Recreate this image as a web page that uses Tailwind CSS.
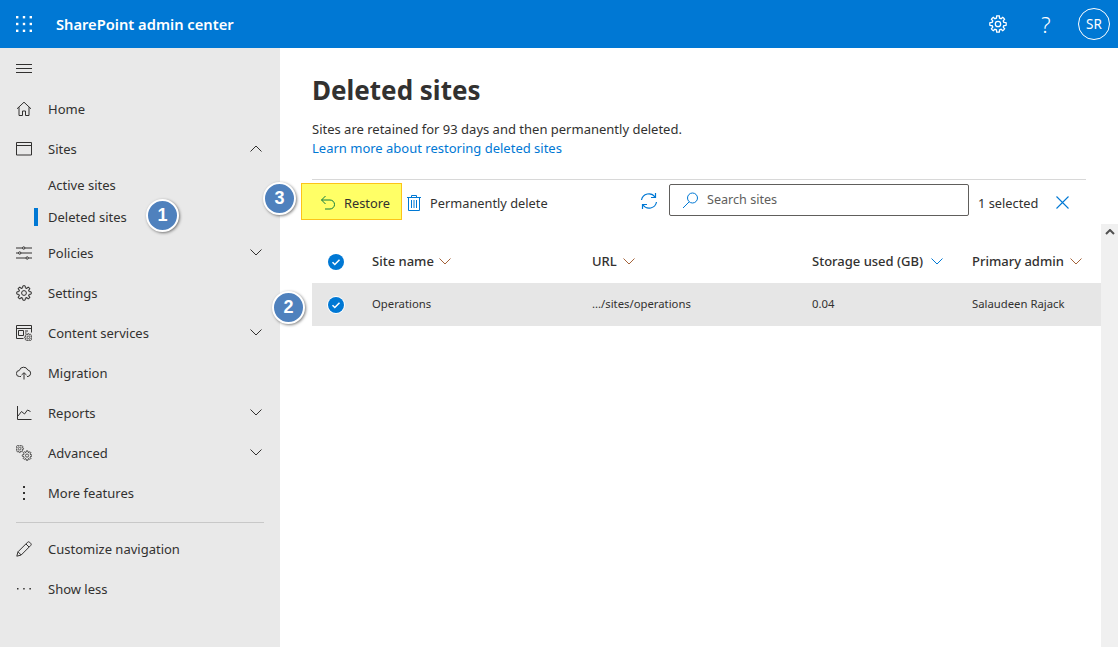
<!DOCTYPE html>
<html lang="en">
<head>
<meta charset="utf-8">
<title>Deleted sites</title>
<script src="https://cdn.jsdelivr.net/npm/@tailwindcss/browser@4"></script>
</head>
<body class="w-[1118px] h-[647px] overflow-hidden bg-white font-['Noto_Sans','Open_Sans',sans-serif] text-[13px] text-[#323130]">
<svg class="hidden" width="0" height="0"><defs>
  <path id="tooth" d="M8.300 4.900 10 4.100 10.200 1.300Q12 .8 13.800 1.300L14 4.100 15.700 4.900"/>
  <g id="gear" fill="none">
    <use href="#tooth"/><use href="#tooth" transform="rotate(45 12 12)"/><use href="#tooth" transform="rotate(90 12 12)"/><use href="#tooth" transform="rotate(135 12 12)"/><use href="#tooth" transform="rotate(180 12 12)"/><use href="#tooth" transform="rotate(225 12 12)"/><use href="#tooth" transform="rotate(270 12 12)"/><use href="#tooth" transform="rotate(315 12 12)"/>
    <circle cx="12" cy="12" r="3.600"/>
  </g>
</defs></svg>
<header class="h-12 bg-[#0078d4] flex items-center text-white">
  <button class="w-12 h-12 flex items-center justify-center">
    <svg width="16" height="16" viewBox="0 0 16 16" fill="#fff"><rect x="0" y="0" width="2.400" height="2.400"/><rect x="6.800" y="0" width="2.400" height="2.400"/><rect x="13.600" y="0" width="2.400" height="2.400"/><rect x="0" y="6.800" width="2.400" height="2.400"/><rect x="6.800" y="6.800" width="2.400" height="2.400"/><rect x="13.600" y="6.800" width="2.400" height="2.400"/><rect x="0" y="13.600" width="2.400" height="2.400"/><rect x="6.800" y="13.600" width="2.400" height="2.400"/><rect x="13.600" y="13.600" width="2.400" height="2.400"/></svg>
  </button>
  <span class="ml-2 text-[14.700px] font-semibold">SharePoint admin center</span>
  <div class="ml-auto flex items-center">
    <button class="w-12 h-12 flex items-center justify-center">
      <svg width="18" height="18" viewBox="0 0 24 24" stroke="#fff" stroke-width="1.700"><use href="#gear"/></svg>
    </button>
    <button class="w-12 h-12 flex items-center justify-center text-[22px] font-light">?</button>
    <div class="ml-[8px] mr-[8px] w-8 h-8 rounded-full border border-white flex items-center justify-center text-[13.500px]">SR</div>
  </div>
</header>
<div class="flex h-[599px]">
  <nav class="w-[280px] shrink-0 bg-[#e9e9e9] flex flex-col">
    <button class="h-10 pl-4 flex items-center">
      <svg width="16" height="10" viewBox="0 0 16 10" stroke="#323130" stroke-width="1"><path d="M0 1.500h16M0 5.500h16M0 9.500h16"/></svg>
    </button>
    <div class="h-px"></div>
    <a class="h-10 flex items-center">
      <span class="w-12 pl-4 flex"><svg width="16" height="16" viewBox="0 0 16 16" fill="none" stroke="#323130"><path d="M1 7.800 8 1.200l7 6.600M3 6.200v8.300h3.500V10h3v4.500H13V6.200"/></svg></span>
      <span class="mt-[2px]">Home</span>
    </a>
    <a class="h-10 flex items-center">
      <span class="w-12 pl-4 flex"><svg width="16" height="14" viewBox="0 0 16 14" fill="none" stroke="#323130"><path d="M.5.500h15v12.500H.5zM.5 3.500h15"/></svg></span>
      <span class="mt-[2px]">Sites</span>
      <svg class="ml-auto mr-[18px] -mt-[2px]" width="12" height="7" viewBox="0 0 12 7" fill="none" stroke="#323130"><path d="m.5 6.500 5.500-5.500 5.500 5.500"/></svg>
    </a>
    <a class="h-8 flex items-center pl-12 pt-[2px]">Active sites</a>
    <a class="h-8 flex items-center pl-12 pt-[2px] relative"><span class="absolute left-[34px] top-[7px] w-1 h-[18px] bg-[#0078d4]"></span>Deleted sites</a>
    <a class="h-10 flex items-center">
      <span class="w-12 pl-4 flex"><svg width="16" height="16" viewBox="0 0 16 16" fill="none" stroke="#323130"><path d="M0 3h6.500M9 3h7M0 8h2.500M5 8h11M0 13h10M12.500 13H16"/><circle cx="7.700" cy="3" r="1.200"/><circle cx="3.700" cy="8" r="1.200"/><circle cx="11.200" cy="13" r="1.200"/></svg></span>
      <span class="mt-[2px]">Policies</span>
      <svg class="ml-auto mr-[18px] -mt-[2px]" width="12" height="7" viewBox="0 0 12 7" fill="none" stroke="#323130"><path d="m.5.500 5.500 5.500 5.500-5.500"/></svg>
    </a>
    <a class="h-10 flex items-center">
      <span class="w-12 pl-4 flex"><svg width="16" height="16" viewBox="0 0 24 24" stroke="#323130" stroke-width="1.500"><use href="#gear"/></svg></span>
      <span class="mt-[2px]">Settings</span>
    </a>
    <a class="h-10 flex items-center">
      <span class="w-12 pl-4 flex"><svg width="16" height="16" viewBox="0 0 16 16" fill="none" stroke="#323130"><path d="M7.500 13.500H.5V.5h15V7.500M.5 3.500h15M2.500 5.500h5v5h-5zM9 6h3M9 8h1.500"/><use href="#gear" transform="translate(8.200 8.200) scale(.35)" stroke-width="2.200"/></svg></span>
      <span class="mt-[2px]">Content services</span>
      <svg class="ml-auto mr-[18px] -mt-[2px]" width="12" height="7" viewBox="0 0 12 7" fill="none" stroke="#323130"><path d="m.5.500 5.500 5.500 5.500-5.500"/></svg>
    </a>
    <a class="h-10 flex items-center">
      <span class="w-12 pl-4 flex"><svg width="16" height="14" viewBox="0 0 16 14" fill="none" stroke="#323130"><path d="M5 10.500H3.500a3 3 0 0 1-.2-6A4.500 4.500 0 0 1 11.800 4a3.300 3.300 0 0 1 .2 6.500h-1M8 13.500V7M5.500 9 8 6.700 10.500 9"/></svg></span>
      <span class="mt-[2px]">Migration</span>
    </a>
    <a class="h-10 flex items-center">
      <span class="w-12 pl-4 flex"><svg width="16" height="16" viewBox="0 0 16 16" fill="none" stroke="#323130"><path d="M1.500 1v13.500H15.500M2 11l3.500-4.500 3 2.500 3-4 3 1.500"/></svg></span>
      <span class="mt-[2px]">Reports</span>
      <svg class="ml-auto mr-[18px] -mt-[2px]" width="12" height="7" viewBox="0 0 12 7" fill="none" stroke="#323130"><path d="m.5.500 5.500 5.500 5.500-5.500"/></svg>
    </a>
    <a class="h-10 flex items-center">
      <span class="w-12 pl-4 flex"><svg width="16" height="16" viewBox="0 0 16 16" stroke="#323130"><use href="#gear" transform="translate(-.7 -.7) scale(.36)" stroke-width="2"/><use href="#gear" transform="translate(5.800 5.300) scale(.44)" stroke-width="1.800"/></svg></span>
      <span class="mt-[2px]">Advanced</span>
      <svg class="ml-auto mr-[18px] -mt-[2px]" width="12" height="7" viewBox="0 0 12 7" fill="none" stroke="#323130"><path d="m.5.500 5.500 5.500 5.500-5.500"/></svg>
    </a>
    <a class="h-10 flex items-center">
      <span class="w-12 pl-4 flex"><svg width="16" height="16" viewBox="0 0 16 16" fill="#323130"><rect x="7" y="1" width="2" height="2"/><rect x="7" y="7" width="2" height="2"/><rect x="7" y="13" width="2" height="2"/></svg></span>
      <span class="mt-[2px]">More features</span>
    </a>
    <div class="mx-4 mt-[9px] mb-[6px] h-[1px] w-[248px] bg-[#c8c8c8]"></div>
    <a class="h-10 flex items-center">
      <span class="w-12 pl-4 flex"><svg width="16" height="16" viewBox="0 0 16 16" fill="none" stroke="#323130"><path d="M.8 15.200 2 10.800 11.500 1.300a1.600 1.600 0 0 1 2.200 0l1 1a1.600 1.600 0 0 1 0 2.200L5.200 14zM2 10.800 5.200 14M10 3l3 3"/></svg></span>
      <span class="mt-[2px]">Customize navigation</span>
    </a>
    <a class="h-10 flex items-center">
      <span class="w-12 pl-4 flex"><svg width="16" height="4" viewBox="0 0 16 4" fill="#323130"><rect x="1" y="1" width="1.500" height="1.500"/><rect x="7.200" y="1" width="1.500" height="1.500"/><rect x="13.400" y="1" width="1.500" height="1.500"/></svg></span>
      <span class="mt-[2px]">Show less</span>
    </a>
  </nav>
  <main class="flex-1 flex flex-col min-w-0 pl-8">
    <h1 class="mt-[23px] text-[26px] leading-[38px] font-bold text-[#323130]">Deleted sites</h1>
    <p class="mt-[11px] leading-[19px]">Sites are retained for 93 days and then permanently deleted.</p>
    <a class="leading-[19px] text-[#0078d4]">Learn more about restoring deleted sites</a>
    <div class="mt-[21px] w-[774px] h-px bg-[#d8d8d8]"></div>
    <div class="flex items-start h-[44px] -ml-[11px] text-[12.800px]">
      <button class="mt-[3px] w-[101px] h-[37px] bg-[#ffff66] border-[1.500px] border-[#fcc419] flex items-center pl-[18px] pt-[3px] gap-[8px]">
        <svg width="16" height="16" viewBox="0 0 16 16" fill="none" stroke="#107c41"><path d="M5.500 1 1.500 5l4 4M1.500 5H10a4.500 4.500 0 0 1 0 9H5"/></svg>
        <span class="mt-[2px]">Restore</span>
      </button>
      <button class="mt-[3px] h-[37px] ml-[5px] pt-[3px] flex items-center gap-[9px]">
        <svg width="14" height="16" viewBox="0 0 14 16" fill="none" stroke="#0078d4"><path d="M0 2.500h14M4.500 2.500V.5h5v2M1.500 2.500v13h11v-13M4.500 5v8M7 5v8M9.500 5v8"/></svg>
        <span class="mt-[2px]">Permanently delete</span>
      </button>
      <button class="ml-auto mt-[12px] flex"><svg width="18" height="18" viewBox="0 0 18 18" fill="none" stroke="#0078d4" stroke-width="1.200"><path d="M1.500 8A7.500 7.500 0 0 1 15 5M16.500 10A7.500 7.500 0 0 1 3 13M15.500 1v4.500H11M2.500 17v-4.500H7"/></svg></button>
      <div class="ml-[11px] mt-[4px] w-[300px] h-[32px] border border-[#605e5c] rounded-[2px] flex items-center pl-3 gap-2">
        <svg width="17" height="17" viewBox="0 0 17 17" fill="none" stroke="#0078d4"><circle cx="10.500" cy="6" r="5"/><path d="M7 10 1 16"/></svg>
        <span class="text-[#605e5c] text-[12.600px] mt-[1px]">Search sites</span>
      </div>
      <span class="ml-[9px] mt-[14px] leading-[19px] w-[60px] whitespace-nowrap">1 selected</span>
      <button class="ml-[18px] mt-[16px] mr-[49px] flex"><svg width="13" height="13" viewBox="0 0 13 13" fill="none" stroke="#0078d4" stroke-width="1.100"><path d="m.5.500 12 12M12.500.5l-12 12"/></svg></button>
    </div>
    <div class="flex-1 flex min-h-0">
      <div class="flex-1 min-w-0">
        <div class="h-[59px] pt-[17px] flex items-center font-medium">
          <span class="w-[60px] pl-4 flex"><svg width="16" height="16" viewBox="0 0 16 16"><circle cx="8" cy="8" r="8" fill="#0078d4"/><path d="m4.500 8.300 2.300 2.200 4.700-4.700" fill="none" stroke="#fff" stroke-width="1.500"/></svg></span>
          <span class="w-[220px] flex items-center gap-[5px]">Site name <svg class="-mt-[1px]" width="12" height="7" viewBox="0 0 12 7" fill="none" stroke="#a4633a"><path d="m.5.500 5.500 5.500 5.500-5.500"/></svg></span>
          <span class="w-[220px] flex items-center gap-[6px]">URL <svg class="-mt-[1px]" width="12" height="7" viewBox="0 0 12 7" fill="none" stroke="#a4633a"><path d="m.5.500 5.500 5.500 5.500-5.500"/></svg></span>
          <span class="w-[160px] flex items-center gap-[8px] whitespace-nowrap">Storage used (GB) <svg class="-mt-[1px]" width="12" height="7" viewBox="0 0 12 7" fill="none" stroke="#0078d4"><path d="m.5.500 5.500 5.500 5.500-5.500"/></svg></span>
          <span class="flex items-center gap-[6px] whitespace-nowrap">Primary admin <svg class="-mt-[1px]" width="12" height="7" viewBox="0 0 12 7" fill="none" stroke="#a4633a"><path d="m.5.500 5.500 5.500 5.500-5.500"/></svg></span>
        </div>
        <div class="h-[43px] bg-[#e6e6e6] flex items-center text-[11.300px]">
          <span class="w-[60px] pl-[15px] flex"><svg width="18" height="18" viewBox="0 0 18 18"><circle cx="9" cy="9" r="9" fill="#fff"/><circle cx="9" cy="9" r="8" fill="#0078d4"/><path d="m5.500 9.300 2.300 2.200 4.700-4.700" fill="none" stroke="#fff" stroke-width="1.500"/></svg></span>
          <span class="w-[220px]">Operations</span>
          <span class="w-[220px]">.../sites/operations</span>
          <span class="w-[160px]">0.04</span>
          <span class="whitespace-nowrap">Salaudeen Rajack</span>
        </div>
      </div>
      <div class="w-[17px] shrink-0 bg-[#f0f0f0] flex justify-center pt-[5px]">
        <svg width="10" height="6" viewBox="0 0 10 6" fill="none" stroke="#505050" stroke-width="2"><path d="m1 5 4-4 4 4"/></svg>
      </div>
    </div>
  </main>
</div>
<div class="absolute left-[146px] top-[199px] w-[33px] h-[33px] rounded-full bg-[#4f81bd] border-2 border-white shadow-[1px_1px_3px_rgba(0,0,0,0.5)] flex items-center justify-center text-white font-bold font-['Liberation_Sans'] text-[18px]">1</div>
<div class="absolute left-[272px] top-[291px] w-[33px] h-[33px] rounded-full bg-[#4f81bd] border-2 border-white shadow-[1px_1px_3px_rgba(0,0,0,0.5)] flex items-center justify-center text-white font-bold font-['Liberation_Sans'] text-[18px]">2</div>
<div class="absolute left-[263px] top-[182px] w-[33px] h-[33px] rounded-full bg-[#4f81bd] border-2 border-white shadow-[1px_1px_3px_rgba(0,0,0,0.5)] flex items-center justify-center text-white font-bold font-['Liberation_Sans'] text-[18px]">3</div>
</body>
</html>
